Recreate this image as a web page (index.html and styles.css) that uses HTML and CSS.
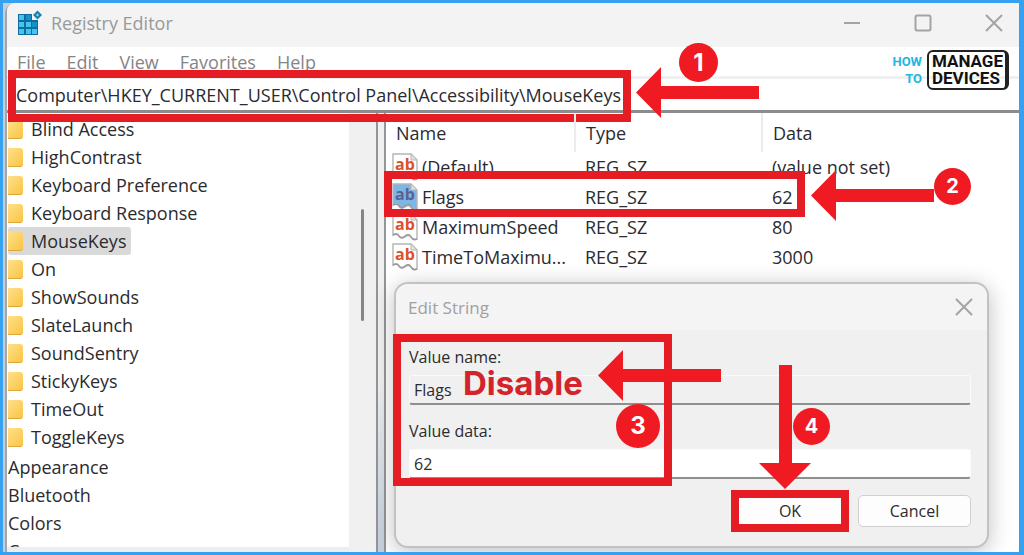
FILE: index.html
```html
<!DOCTYPE html>
<html lang="en">
<head>
    <meta charset="UTF-8">
    <meta name="viewport" content="width=device-width, initial-scale=1.0">
    <title>Registry Editor</title>
    <link rel="stylesheet" href="styles.css">
</head>
<body>
    <!-- Shared shapes -->
    <svg class="defs" width="0" height="0" aria-hidden="true">
        <symbol id="close" viewBox="0 0 18 18">
            <path d="M1 1l16 16M17 1L1 17" fill="none" stroke="#a3a3a3" stroke-width="2"/>
        </symbol>
        <symbol id="string" viewBox="0 0 26 28">
            <path class="paper" d="M1 1h18l6 6v19q-4 1-6-2t-6 0-6-1-6-1z" stroke="#b5b5b5" stroke-width="1.4"/>
            <path d="M19 1v6h6z" fill="#e4e4e4" stroke="#b5b5b5"/>
            <path d="M1 22q4-2 6 1t6 0 6 1 6 2" fill="none" stroke="#999" stroke-width="1.4"/>
        </symbol>
        <symbol id="arrow-left" viewBox="0 0 123 51">
            <path d="M0 25.500L25 0v19h98v13H25v19z" fill="#f01b22"/>
        </symbol>
        <symbol id="arrow-down" viewBox="0 0 52 124">
            <path d="M20 0h13v98h19L26 124 0 98h20z" fill="#f01b22"/>
        </symbol>
    </svg>

    <div class="window">
        <header class="title-bar">
            <svg class="app-icon" viewBox="0 0 26 26" aria-hidden="true">
                <path d="M1 4h14v6h6v15H1z" fill="#0f6c9c"/>
                <path d="M2 5h5v5H2zM2 12h5v5H2zM9 12h5v5H9zM2 19h5v5H2zM9 19h5v5H9zM15 19h5v5h-5z" fill="#45c3f0"/>
                <path d="M9 5h5v5H9zM15 12h5v5h-5z" fill="#1590c8"/>
                <path d="M20.500 0.500L25 5l-4.500 4.500L16 5z" fill="#1a7fae"/>
                <path d="M20.500 3.500L22 5l-1.500 1.500L19 5z" fill="#8ad9f5"/>
            </svg>
            <h1>Registry Editor</h1>
            <div class="window-buttons">
                <button aria-label="Minimize"><svg width="18" height="18"><path d="M1 9h16" stroke="#a3a3a3" stroke-width="2"/></svg></button>
                <button aria-label="Maximize"><svg width="18" height="18"><rect x="1.500" y="1.500" width="15" height="15" rx="1.500" fill="none" stroke="#a3a3a3" stroke-width="2"/></svg></button>
                <button aria-label="Close"><svg width="18" height="18"><use href="#close"/></svg></button>
            </div>
        </header>

        <nav class="menu">
            <button>File</button>
            <button>Edit</button>
            <button>View</button>
            <button>Favorites</button>
            <button>Help</button>
        </nav>

        <div class="address">
            <input type="text" aria-label="Address" value="Computer\HKEY_CURRENT_USER\Control Panel\Accessibility\MouseKeys">
            <div class="mark mark-address"></div>
            <svg class="arrow arrow-1"><use href="#arrow-left"/></svg>
            <span class="step step-1">1</span>
            <div class="logo">
                <div class="logo-how">HOW<br>TO</div>
                <div class="logo-box">MANAGE<br>DEVICES</div>
            </div>
        </div>

        <main class="panes">
            <div class="tree">
                <ul class="subkeys">
                    <li><span>Blind Access</span></li>
                    <li><span>HighContrast</span></li>
                    <li><span>Keyboard Preference</span></li>
                    <li><span>Keyboard Response</span></li>
                    <li class="selected"><span>MouseKeys</span></li>
                    <li><span>On</span></li>
                    <li><span>ShowSounds</span></li>
                    <li><span>SlateLaunch</span></li>
                    <li><span>SoundSentry</span></li>
                    <li><span>StickyKeys</span></li>
                    <li><span>TimeOut</span></li>
                    <li><span>ToggleKeys</span></li>
                </ul>
                <ul>
                    <li>Appearance</li>
                    <li>Bluetooth</li>
                    <li>Colors</li>
                    <li>Cursors</li>
                </ul>
            </div>
            <div class="scrollbar"><div class="thumb"></div></div>
            <div class="splitter"></div>

            <div class="values">
                <table>
                    <colgroup>
                        <col class="col-name">
                        <col class="col-type">
                        <col>
                    </colgroup>
                    <thead>
                        <tr><th>Name</th><th>Type</th><th>Data</th></tr>
                    </thead>
                    <tbody>
                        <tr>
                            <td><div class="name"><span class="icon"><svg><use href="#string"/></svg><b>ab</b></span>(Default)</div></td>
                            <td>REG_SZ</td>
                            <td>(value not set)</td>
                        </tr>
                        <tr class="active">
                            <td><div class="name"><span class="icon"><svg><use href="#string"/></svg><b>ab</b></span>Flags</div></td>
                            <td>REG_SZ</td>
                            <td>62</td>
                        </tr>
                        <tr>
                            <td><div class="name"><span class="icon"><svg><use href="#string"/></svg><b>ab</b></span>MaximumSpeed</div></td>
                            <td>REG_SZ</td>
                            <td>80</td>
                        </tr>
                        <tr>
                            <td><div class="name"><span class="icon"><svg><use href="#string"/></svg><b>ab</b></span>TimeToMaximu...</div></td>
                            <td>REG_SZ</td>
                            <td>3000</td>
                        </tr>
                    </tbody>
                </table>
                <div class="mark mark-row"></div>
                <svg class="arrow arrow-2"><use href="#arrow-left"/></svg>
                <span class="step step-2">2</span>

                <form class="dialog" role="dialog" aria-labelledby="dialog-title">
                    <div class="dialog-title">
                        <h2 id="dialog-title">Edit String</h2>
                        <button type="button" aria-label="Close"><svg width="18" height="18"><use href="#close"/></svg></button>
                    </div>
                    <div class="dialog-body">
                        <label for="value-name">Value name:</label>
                        <input type="text" id="value-name" value="Flags" readonly>
                        <label for="value-data">Value data:</label>
                        <input type="text" id="value-data" value="62">
                        <div class="dialog-buttons">
                            <button type="button" class="ok">OK</button>
                            <button type="button">Cancel</button>
                        </div>
                    </div>
                    <div class="mark mark-fields"></div>
                    <strong class="note">Disable</strong>
                    <svg class="arrow arrow-3"><use href="#arrow-left"/></svg>
                    <span class="step step-3">3</span>
                    <svg class="arrow-down"><use href="#arrow-down"/></svg>
                    <span class="step step-4">4</span>
                </form>
            </div>
        </main>
    </div>
</body>
</html>
```

FILE: styles.css
```css
* {
    box-sizing: border-box;
}

body {
    margin: 0;
    height: 100vh;
    display: flex;
    overflow: hidden;
    border: 3px solid #35a1f0;
    border-right-width: 5px;
    padding-left: 2px;
    background-color: #c3d0dc;
    font-family: "Open Sans", "Noto Sans", sans-serif;
    font-size: 18px;
    color: #2b2b2f;
}

h1, h2, ul {
    margin: 0;
    padding: 0;
    font-size: 18px;
    font-weight: normal;
}

button, input {
    font: inherit;
    color: inherit;
    border: none;
    padding: 0;
    background: none;
}

.defs {
    position: absolute;
}

.window {
    flex: 1;
    min-width: 0;
    display: flex;
    flex-direction: column;
    border-left: 2px solid #a3a5aa;
    border-top-left-radius: 10px;
    background-color: #fff;
}

/* Title bar and menu */
.title-bar {
    display: flex;
    align-items: center;
    height: 44px;
    padding: 0 16px 4px 10px;
    background-color: #f3f3f3;
    border-top-left-radius: 8px;
    color: #999;
}

.app-icon {
    width: 26px;
    height: 26px;
    margin-right: 8px;
}

.window-buttons {
    display: flex;
    gap: 53px;
    margin-left: auto;
}

.window-buttons button,
.dialog-title button {
    display: flex;
}

.menu {
    display: flex;
    gap: 21px;
    height: 32px;
    padding: 0 10px;
    border-bottom: 3px solid #f0f0f0;
    color: #858585;
}

/* Address bar */
.address {
    position: relative;
    height: 34px;
    border-bottom: 3px solid #8c8c8c;
}

.address input {
    width: 100%;
    height: 31px;
    padding-left: 9px;
}

/* Panes */
.panes {
    flex: 1;
    min-height: 0;
    display: flex;
}

.tree {
    width: 342px;
    padding-top: 2px;
    border-bottom: 5px solid #ededed;
    overflow: hidden;
    line-height: 28px;
}

.tree ul {
    list-style: none;
    padding-left: 1px;
}

.tree .subkeys {
    padding-bottom: 2px;
}

.subkeys li {
    display: flex;
    align-items: center;
}

.subkeys li::before {
    content: "";
    width: 15px;
    height: 18px;
    border-radius: 0 3px 3px 0;
    border-bottom: 1px solid #e0a63a;
    background: linear-gradient(135deg, #ffe08a, #f8c544);
}

.subkeys span {
    padding: 0 5px 0 8px;
}

.subkeys .selected {
    width: fit-content;
    border-radius: 3px;
    background-color: #d9d9d9;
}

.scrollbar {
    width: 27px;
    padding: 96px 12px 0;
    background-color: #f0f0f0;
}

.thumb {
    height: 112px;
    border-radius: 2px;
    background-color: #868686;
}

.splitter {
    width: 10px;
    border: 2px solid #93959a;
    border-width: 0 2px;
    background: linear-gradient(#f0f0f0 60%, #c3d0dc);
}

.values {
    position: relative;
    flex: 1;
    min-width: 0;
}

table {
    width: 100%;
    table-layout: fixed;
    border-collapse: collapse;
}

.col-name {
    width: 189px;
}

.col-type {
    width: 187px;
}

th, td {
    height: 30px;
    padding: 0 0 0 10px;
    text-align: left;
    font-weight: normal;
    line-height: 30px;
    white-space: nowrap;
}

th {
    height: 39px;
    border-right: 2px solid #ebebeb;
}

th:last-child {
    border-right: none;
}

td:first-child {
    padding-left: 6px;
}

.name {
    display: flex;
    align-items: center;
    gap: 4px;
}

.icon {
    position: relative;
    width: 26px;
    height: 28px;
}

.icon svg {
    display: block;
    width: 26px;
    height: 28px;
    fill: #fff;
}

.icon b {
    position: absolute;
    inset: 0;
    text-align: center;
    font-size: 16px;
    line-height: 22px;
    color: #d9532c;
}

.active .icon svg {
    fill: #7ab6e6;
}

.active .icon b {
    color: #5c6290;
}

/* Edit String dialog */
.dialog {
    position: absolute;
    right: 30px;
    bottom: 4px;
    width: 595px;
    border: 2px solid #c2c2c2;
    border-radius: 14px;
    background-color: #f0f0f0;
    box-shadow: 0 4px 22px rgba(0, 0, 0, 0.25);
}

.dialog-title {
    display: flex;
    justify-content: space-between;
    align-items: center;
    height: 46px;
    padding: 0 14px 0 12px;
    border-radius: 12px 12px 0 0;
    background-color: #f4f4f4;
    color: #a0a0a0;
}

.dialog-title h2 {
    font-size: 17px;
}

.dialog-body {
    display: flex;
    flex-direction: column;
    padding: 13px 16px 19px 13px;
    font-size: 16px;
}

.dialog label {
    line-height: 28px;
}

.dialog-body input {
    height: 30px;
    margin: 4px 0 12px;
    padding-left: 4px;
    border: 1px solid #fafafa;
    border-bottom: 2px solid #8f8f8f;
    border-radius: 3px;
    background-color: #fff;
}

.dialog-body input[readonly] {
    background-color: #f0f0f0;
}

.dialog-buttons {
    display: flex;
    justify-content: flex-end;
    gap: 14px;
    padding-top: 4px;
}

.dialog-buttons button {
    width: 113px;
    height: 32px;
    border: 1px solid #d0d0d0;
    border-radius: 5px;
    background-color: #fdfdfd;
}

.dialog-buttons .ok {
    width: 108px;
    outline: 8px solid #e61c24;
    outline-offset: -3px;
    border-radius: 0;
}

/* Red marks, arrows and step numbers laid over the window */
.mark {
    position: absolute;
    border: 8px solid #e61c24;
    pointer-events: none;
}

.mark-address {
    top: -9px;
    left: 1px;
    width: 623px;
    height: 52px;
}

.mark-row {
    top: 58px;
    left: -2px;
    width: 421px;
    height: 46px;
}

.mark-fields {
    top: 50px;
    left: -3px;
    width: 279px;
    height: 152px;
}

.arrow {
    position: absolute;
    width: 123px;
    height: 51px;
}

.arrow-1 {
    top: -12px;
    left: 629px;
}

.arrow-2 {
    top: 57px;
    left: 425px;
}

.arrow-3 {
    top: 66px;
    left: 202px;
}

.arrow-down {
    position: absolute;
    top: 81px;
    left: 363px;
    width: 52px;
    height: 124px;
}

.step {
    position: absolute;
    width: 37px;
    height: 37px;
    border-radius: 50%;
    background-color: #f01b22;
    color: #fff;
    font-family: Inter, sans-serif;
    font-size: 20px;
    font-weight: bold;
    line-height: 37px;
    text-align: center;
}

.step-1 {
    top: -36px;
    left: 672px;
    width: 39px;
    height: 39px;
    font-size: 24px;
    line-height: 39px;
}

.step-2 {
    top: 55px;
    left: 548px;
}

.step-3 {
    top: 120px;
    left: 220px;
    width: 44px;
    height: 44px;
    font-size: 24px;
    line-height: 44px;
}

.step-4 {
    top: 124px;
    left: 397px;
}

.note {
    position: absolute;
    top: 79px;
    left: 67px;
    font-family: Inter, sans-serif;
    font-size: 33px;
    line-height: 40px;
    color: #d3232b;
}

/* Site logo */
.logo {
    position: absolute;
    top: -29px;
    right: 10px;
    display: flex;
    align-items: center;
    gap: 5px;
    font-weight: bold;
    line-height: 17px;
}

.logo-how {
    font-family: Roboto, sans-serif;
    font-size: 13px;
    text-align: right;
    color: #20b8e0;
}

.logo-box {
    width: 82px;
    height: 40px;
    padding: 1px 0 0 3px;
    border: 2px solid #222;
    border-right-width: 4px;
    border-radius: 6px;
    font-family: Roboto, sans-serif;
    font-size: 17px;
    color: #111;
}
```
